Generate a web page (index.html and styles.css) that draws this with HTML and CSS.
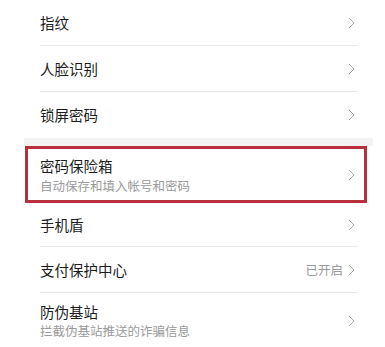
FILE: index.html
```html
<!DOCTYPE html>
<html lang="zh">
<head>
<meta charset="utf-8">
<link rel="stylesheet" href="styles.css">
</head>
<body>
<div class="list">
  <div class="row"><span class="title">指纹</span><svg class="chev" viewBox="0 0 7 12"><polyline points="1,1 6,6 1,11"/></svg></div>
  <div class="row"><span class="title">人脸识别</span><svg class="chev" viewBox="0 0 7 12"><polyline points="1,1 6,6 1,11"/></svg></div>
  <div class="row last"><span class="title">锁屏密码</span><svg class="chev" viewBox="0 0 7 12"><polyline points="1,1 6,6 1,11"/></svg></div>
  <div class="band"></div>
  <div class="row hl">
    <div class="texts"><div class="title">密码保险箱</div><div class="sub">自动保存和填入帐号和密码</div></div>
    <svg class="chev" viewBox="0 0 7 12"><polyline points="1,1 6,6 1,11"/></svg>
  </div>
  <div class="row short"><span class="title">手机盾</span><svg class="chev" viewBox="0 0 7 12"><polyline points="1,1 6,6 1,11"/></svg></div>
  <div class="row"><span class="title">支付保护中心</span><span class="value">已开启</span><svg class="chev" viewBox="0 0 7 12"><polyline points="1,1 6,6 1,11"/></svg></div>
  <div class="row tall last">
    <div class="texts"><div class="title">防伪基站</div><div class="sub">拦截伪基站推送的诈骗信息</div></div>
    <svg class="chev" viewBox="0 0 7 12"><polyline points="1,1 6,6 1,11"/></svg>
  </div>
</div>
</body>
</html>
```
FILE: styles.css
```css
html, body {
  margin: 0;
  padding: 0;
  background: #ffffff;
}
body {
  font-family: "Noto Sans CJK SC", "Noto Sans", sans-serif;
  color: #1c1c1c;
}
.list {
  width: 385px;
}
.row {
  display: flex;
  align-items: center;
  box-sizing: border-box;
  height: 46px;
  margin: 0 27px 0 40px;
  padding-right: 3px;
  border-bottom: 1px solid #e8e8e8;
}
.row.last {
  border-bottom: none;
}
.row.short {
  height: 44px;
}
.row.tall {
  height: 55px;
}
.row.hl {
  height: 57px;
  margin: 0 18px 0 25px;
  padding-left: 12px;
  padding-right: 9px;
  border: 3px solid #b8303c;
}
.title {
  font-size: 14.5px;
  line-height: 20px;
  flex: 1;
  letter-spacing: 0;
}
.texts {
  flex: 1;
  display: flex;
  flex-direction: column;
}
.sub {
  font-size: 12.5px;
  line-height: 17px;
  color: #9a9a9a;
}
.row.hl .sub {
  margin-top: 1px;
}
.value {
  font-size: 12.5px;
  color: #9a9a9a;
  margin-right: 5px;
}
.chev {
  width: 7px;
  height: 12px;
  flex: none;
}
.chev polyline {
  fill: none;
  stroke: #a8a8a8;
  stroke-width: 1;
}
.band {
  height: 8px;
  margin: 0 12px 0 24px;
  background: #f3f3f3;
}
```
